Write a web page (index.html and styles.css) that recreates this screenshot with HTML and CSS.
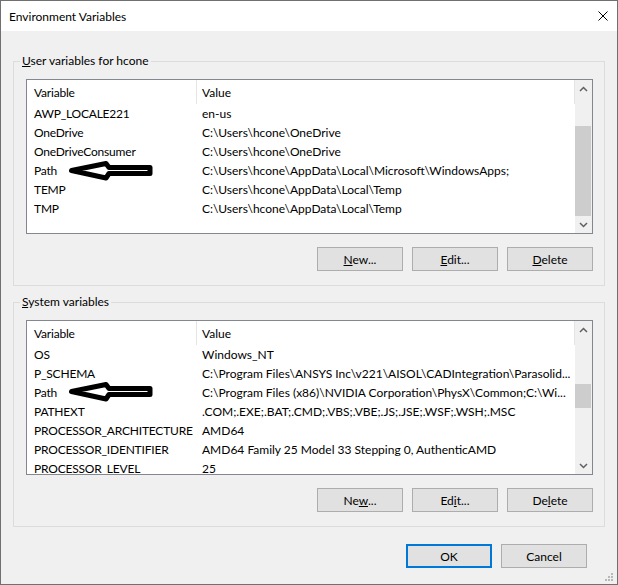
FILE: index.html
```html
<!DOCTYPE html>
<html lang="en">
<head>
    <meta charset="UTF-8">
    <title>Environment Variables</title>
    <link rel="stylesheet" href="styles.css">
</head>
<body>
    <div class="window">
        <div class="titlebar">
            <span class="title">Environment Variables</span>
            <svg class="close" width="10" height="10" viewBox="0 0 10 10">
                <path d="M0.5 0.5L9.5 9.5M9.5 0.5L0.5 9.5" stroke="#000" stroke-width="1"/>
            </svg>
        </div>

        <div class="content">
            <fieldset class="group">
                <legend><u>U</u>ser variables for hcone</legend>
                <div class="list">
                    <div class="list-view">
                        <div class="row header">
                            <div class="cell name">Variable</div>
                            <div class="cell value">Value</div>
                        </div>
                        <div class="row"><div class="cell name">AWP_LOCALE221</div><div class="cell value">en-us</div></div>
                        <div class="row"><div class="cell name">OneDrive</div><div class="cell value">C:\Users\hcone\OneDrive</div></div>
                        <div class="row"><div class="cell name">OneDriveConsumer</div><div class="cell value">C:\Users\hcone\OneDrive</div></div>
                        <div class="row"><div class="cell name">Path</div><div class="cell value">C:\Users\hcone\AppData\Local\Microsoft\WindowsApps;</div></div>
                        <div class="row"><div class="cell name">TEMP</div><div class="cell value">C:\Users\hcone\AppData\Local\Temp</div></div>
                        <div class="row"><div class="cell name">TMP</div><div class="cell value">C:\Users\hcone\AppData\Local\Temp</div></div>
                    </div>
                    <div class="scrollbar">
                        <div class="scroll-btn">
                            <svg width="9" height="6" viewBox="0 0 9 6"><path d="M1 5L4.5 1.5L8 5" fill="none" stroke="#606060" stroke-width="1.5"/></svg>
                        </div>
                        <div class="track"><div class="thumb thumb-user"></div></div>
                        <div class="scroll-btn">
                            <svg width="9" height="6" viewBox="0 0 9 6"><path d="M1 1L4.5 4.5L8 1" fill="none" stroke="#606060" stroke-width="1.5"/></svg>
                        </div>
                    </div>
                    <svg class="arrow arrow-user" width="90" height="24" viewBox="0 0 90 24">
                        <path d="M5.5 11.5L40 4.5L43 8.5L84 8.5L84 14.5L43 14.5L40 19Z" fill="#fff" stroke="#000" stroke-width="5" stroke-linejoin="round"/>
                    </svg>
                </div>
                <div class="buttons">
                    <button class="btn"><u>N</u>ew...</button>
                    <button class="btn"><u>E</u>dit...</button>
                    <button class="btn"><u>D</u>elete</button>
                </div>
            </fieldset>

            <fieldset class="group group-system">
                <legend><u>S</u>ystem variables</legend>
                <div class="list">
                    <div class="list-view">
                        <div class="row header">
                            <div class="cell name">Variable</div>
                            <div class="cell value">Value</div>
                        </div>
                        <div class="row"><div class="cell name">OS</div><div class="cell value">Windows_NT</div></div>
                        <div class="row"><div class="cell name">P_SCHEMA</div><div class="cell value">C:\Program Files\ANSYS Inc\v221\AISOL\CADIntegration\Parasolid...</div></div>
                        <div class="row"><div class="cell name">Path</div><div class="cell value">C:\Program Files (x86)\NVIDIA Corporation\PhysX\Common;C:\Wi...</div></div>
                        <div class="row"><div class="cell name">PATHEXT</div><div class="cell value">.COM;.EXE;.BAT;.CMD;.VBS;.VBE;.JS;.JSE;.WSF;.WSH;.MSC</div></div>
                        <div class="row"><div class="cell name">PROCESSOR_ARCHITECTURE</div><div class="cell value">AMD64</div></div>
                        <div class="row"><div class="cell name">PROCESSOR_IDENTIFIER</div><div class="cell value">AMD64 Family 25 Model 33 Stepping 0, AuthenticAMD</div></div>
                        <div class="row"><div class="cell name">PROCESSOR_LEVEL</div><div class="cell value">25</div></div>
                    </div>
                    <div class="scrollbar">
                        <div class="scroll-btn">
                            <svg width="9" height="6" viewBox="0 0 9 6"><path d="M1 5L4.5 1.5L8 5" fill="none" stroke="#606060" stroke-width="1.5"/></svg>
                        </div>
                        <div class="track"><div class="thumb thumb-system"></div></div>
                        <div class="scroll-btn">
                            <svg width="9" height="6" viewBox="0 0 9 6"><path d="M1 1L4.5 4.5L8 1" fill="none" stroke="#606060" stroke-width="1.5"/></svg>
                        </div>
                    </div>
                    <svg class="arrow arrow-system" width="90" height="24" viewBox="0 0 90 24">
                        <path d="M5.5 11.5L40 4.5L43 8.5L84 8.5L84 14.5L43 14.5L40 19Z" fill="#fff" stroke="#000" stroke-width="5" stroke-linejoin="round"/>
                    </svg>
                </div>
                <div class="buttons">
                    <button class="btn">Ne<u>w</u>...</button>
                    <button class="btn">Ed<u>i</u>t...</button>
                    <button class="btn">De<u>l</u>ete</button>
                </div>
            </fieldset>

            <div class="dialog-buttons">
                <button class="btn btn-default">OK</button>
                <button class="btn">Cancel</button>
            </div>
        </div>

        <svg class="grip" width="9" height="9" viewBox="0 0 9 9">
            <rect x="6" y="0" width="2" height="2" fill="#b8b8b8"/>
            <rect x="3" y="3" width="2" height="2" fill="#b8b8b8"/>
            <rect x="6" y="3" width="2" height="2" fill="#b8b8b8"/>
            <rect x="0" y="6" width="2" height="2" fill="#b8b8b8"/>
            <rect x="3" y="6" width="2" height="2" fill="#b8b8b8"/>
            <rect x="6" y="6" width="2" height="2" fill="#b8b8b8"/>
        </svg>
    </div>
</body>
</html>
```

FILE: styles.css
```css
* {
    box-sizing: border-box;
}

body {
    margin: 0;
    font-family: 'Lato', 'Liberation Sans', sans-serif;
    font-size: 12px;
    color: #000;
    background-color: #fff;
}

.window {
    position: relative;
    width: 618px;
    height: 585px;
    border: 1px solid #707070;
    background-color: #f0f0f0;
}

.titlebar {
    height: 30px;
    background-color: #fff;
    display: flex;
    align-items: center;
    justify-content: space-between;
    padding: 0 9px 0 8px;
}

.title {
    font-size: 12px;
}

.close {
    display: block;
}

.content {
    padding: 22px 12px 0 12px;
}

.group {
    margin: 0;
    padding: 10px 11px 14px 12px;
    border: 1px solid #dcdcdc;
    min-inline-size: 0;
}

.group-system {
    margin-top: 8px;
}

.group legend {
    margin-left: -6px;
    padding: 0 2px;
    line-height: 16px;
}

.list {
    position: relative;
    display: flex;
    height: 155px;
    border: 1px solid #828790;
    background-color: #fff;
}

.list-view {
    flex: 1;
    overflow: hidden;
}

.row {
    display: flex;
    height: 19px;
    align-items: center;
    white-space: nowrap;
}

.row.header {
    height: 24px;
    align-items: stretch;
}

.row.header .cell {
    display: flex;
    align-items: center;
    border-right: 1px solid #e5e5e5;
}

.cell.name {
    width: 170px;
    flex-shrink: 0;
    padding-left: 7px;
    overflow: hidden;
    letter-spacing: -0.2px;
}

.cell.value {
    flex: 1;
    padding-left: 5px;
    overflow: hidden;
}

.scrollbar {
    width: 17px;
    display: flex;
    flex-direction: column;
    background-color: #f0f0f0;
}

.scroll-btn {
    height: 17px;
    display: flex;
    align-items: center;
    justify-content: center;
}

.track {
    flex: 1;
    padding: 0 1px 0 0;
}

.thumb {
    background-color: #cdcdcd;
}

.thumb-user {
    margin-top: 29px;
    height: 90px;
}

.thumb-system {
    margin-top: 46px;
    height: 24px;
}

.arrow {
    position: absolute;
    left: 39px;
}

.arrow-user {
    top: 79px;
}

.arrow-system {
    top: 59px;
}

.buttons {
    display: flex;
    justify-content: flex-end;
    gap: 9px;
    margin-top: 13px;
}

.btn {
    width: 86px;
    height: 24px;
    padding: 0;
    font-family: inherit;
    font-size: 12px;
    color: #000;
    background-color: #e1e1e1;
    border: 1px solid #adadad;
}

.btn-default {
    border: 2px solid #0078d7;
}

.dialog-buttons {
    display: flex;
    justify-content: flex-end;
    gap: 9px;
    margin-top: 17px;
    padding-right: 18px;
}

.grip {
    position: absolute;
    right: 3px;
    bottom: 2px;
}
```
